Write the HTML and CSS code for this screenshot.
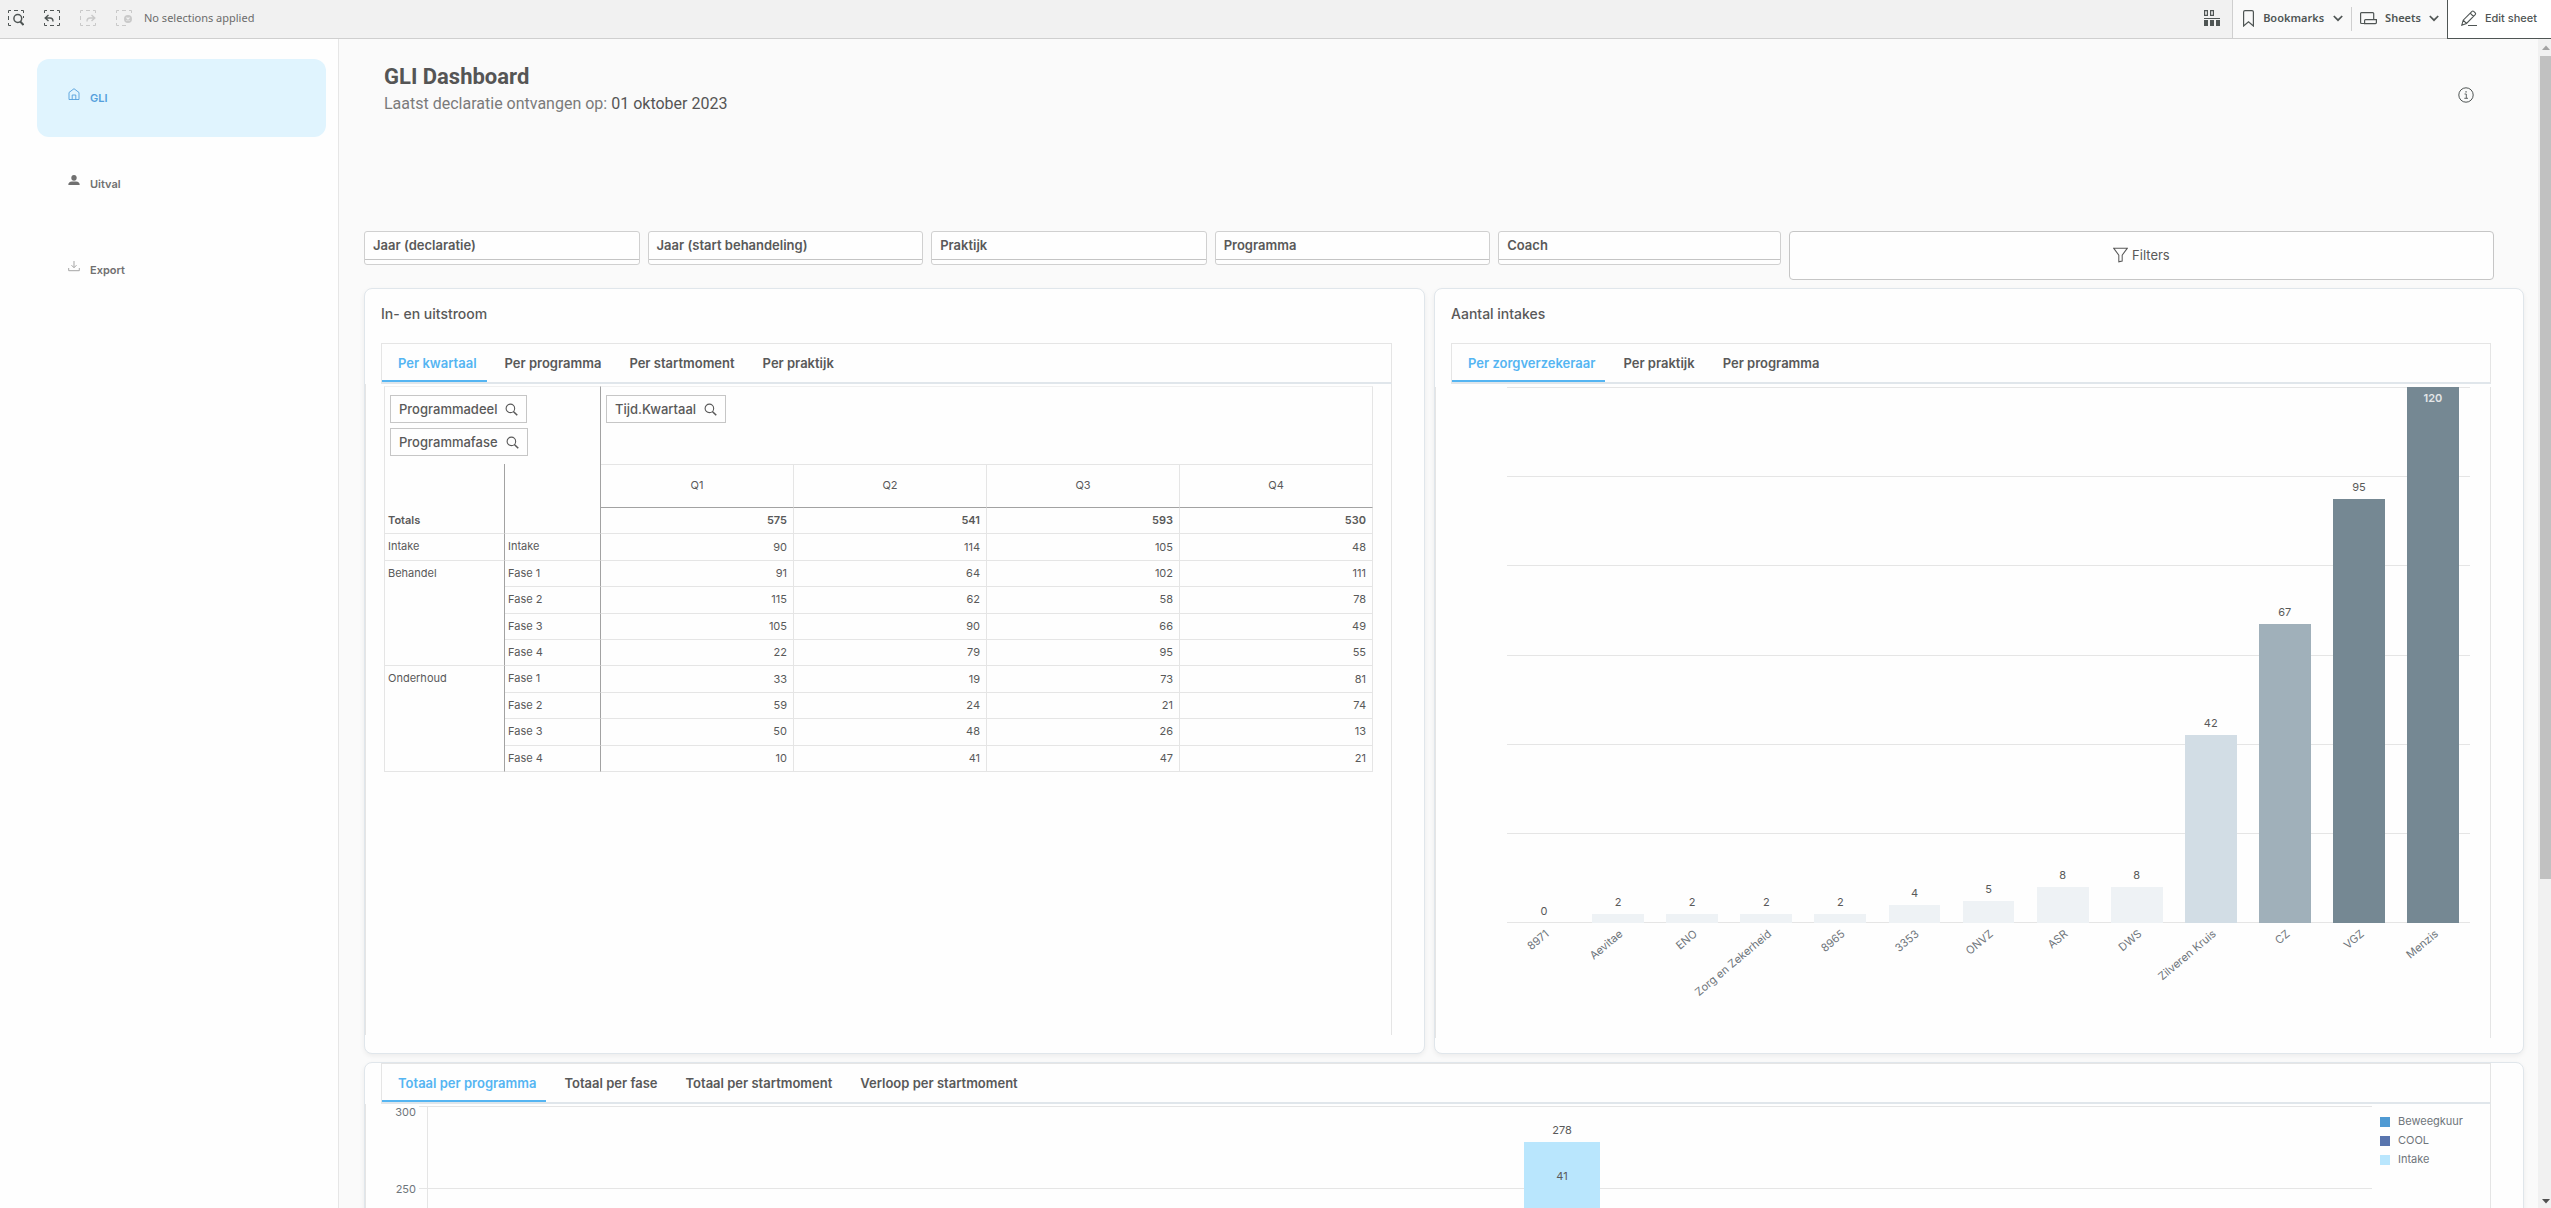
FILE: index.html
```html
<!DOCTYPE html>
<html lang="nl">
<head>
<meta charset="utf-8">
<meta name="viewport" content="width=device-width, initial-scale=1">
<title>GLI Dashboard</title>
<link rel="stylesheet" href="styles.css">
</head>
<body>
<svg class="sprite" aria-hidden="true">
  <symbol id="i-search" viewBox="0 0 14 14"><circle cx="5.8" cy="5.8" r="4.6" fill="none" stroke="currentColor" stroke-width="1.2"/><path d="M9 9.2l4.2 4" fill="none" stroke="currentColor" stroke-width="1.7"/></symbol>
  <symbol id="i-chevron" viewBox="0 0 10 7"><path d="M.8 1l4.2 4.2L9.2 1" fill="none" stroke="currentColor" stroke-width="1.7"/></symbol>
</svg>
<div class="app">
  <header class="toolbar">
    <div class="selections">
      <button class="tool" aria-label="Selection search">
        <svg viewBox="0 0 16 16"><path class="dash" d="M.5 3V.5H3M6 .5h4M13 .5h2.500V3M.5 6v4M.5 13v2.500H3M15.500 6v2"/><circle cx="9.800" cy="8.500" r="3.900" fill="none" stroke="currentColor" stroke-width="1.500"/><path d="M12.200 11.500l3.300 3.500" stroke="currentColor" stroke-width="2"/></svg>
      </button>
      <button class="tool" aria-label="Step back">
        <svg viewBox="0 0 16 16"><path class="dash" d="M.5 3V.5H3M6 .5h4M13 .5h2.500V3M15.500 6v4M15.500 13v2.500H13M10 15.500H6M3 15.500H.5V13"/><path d="M4.500 5L1.200 8l3.300 3M1.500 8H6q3 0 3 3.500" fill="none" stroke="currentColor" stroke-width="1.400"/></svg>
      </button>
      <button class="tool" aria-label="Step forward" disabled>
        <svg viewBox="0 0 16 16"><path class="dash" d="M3 .5H.5V3M6 .5h4M13 .5h2.500V3M.5 6v4M.5 13v2.500H3M6 15.500h4M13 15.500h2.500V13"/><path d="M11.500 5l3.300 3-3.300 3M14.500 8H10q-3 0-3 3.500" fill="none" stroke="currentColor" stroke-width="1.400"/></svg>
      </button>
      <button class="tool" aria-label="Clear all selections" disabled>
        <svg viewBox="0 0 16 16"><path class="dash" d="M3 .5H.5V3M6 .5h4M13 .5h2.500V3M.5 6v4M.5 13v2.500H3M6 15.500h4"/><circle cx="12" cy="9" r="4" fill="currentColor"/><path d="M10.500 7.500l3 3M13.500 7.500l-3 3" stroke="#f1f1f1" stroke-width="1.200"/></svg>
      </button>
      <span class="sel-text">No selections applied</span>
    </div>
    <button class="tool selections-tool" aria-label="Selections tool">
      <svg viewBox="0 0 16 16"><path d="M.6.600h2.800v4.800H.6zM6.600.600h2.800v4.800H6.600z" fill="none" stroke="currentColor" stroke-width="1.200"/><path d="M0 8h16v1H0zM0 10h4v6H0zM6 10h4v6H6zM12 10h4v6h-4z" fill="currentColor"/></svg>
    </button>
    <nav class="sheet-nav">
      <button class="nav-btn">
        <svg class="ic-bookmark" viewBox="0 0 11 17"><path d="M.6 2q0-1.400 1.400-1.400h7q1.400 0 1.400 1.400v14l-4.900-4.200L.6 16z" fill="none" stroke="currentColor" stroke-width="1.200"/></svg>
        <span>Bookmarks</span>
        <svg class="ic-chevron"><use href="#i-chevron"/></svg>
      </button>
      <button class="nav-btn">
        <svg class="ic-sheets" viewBox="0 0 17 13"><path d="M4.600 11.500H1.500q-.9 0-.9-.9v-9q0-1 .9-1h11.200q1 0 1 1v5.900M5.500 7.600h10.900v3q0 1-1 1H4.600V8.500q0-.9.900-.9z" fill="none" stroke="currentColor" stroke-width="1.200"/></svg>
        <span>Sheets</span>
        <svg class="ic-chevron"><use href="#i-chevron"/></svg>
      </button>
    </nav>
    <button class="edit-btn">
      <svg class="ic-edit" viewBox="0 0 16 16"><path d="M.8 15.200l1.400-5L11 1.400q.8-.8 1.700 0l1.500 1.500q.8.800 0 1.700L5.500 13.500zM2.200 10.200l3.300 3.300M9.200 3.200l3.300 3.300" fill="none" stroke="currentColor" stroke-width="1.100"/><path d="M7 15.500h9" stroke="currentColor"/></svg>
      <span>Edit sheet</span>
    </button>
  </header>

  <div class="workspace">
    <nav class="sidebar">
      <a class="side-link active" href="#gli">
        <svg viewBox="0 0 12 12"><path d="M1 11.500V4.500L6 .7l5 3.800v7zM4.200 11.500V7h3.600v4.500" fill="none" stroke="currentColor" stroke-width=".9"/></svg>
        <span>GLI</span>
      </a>
      <a class="side-link" href="#uitval">
        <svg viewBox="0 0 12 12"><ellipse cx="6" cy="3.800" rx="2.700" ry="2.900" fill="currentColor"/><path d="M.3 11q0-3.500 3.700-3.500h4q3.700 0 3.700 3.500z" fill="currentColor"/></svg>
        <span>Uitval</span>
      </a>
      <a class="side-link export" href="#export">
        <svg viewBox="0 0 12 12"><path d="M6 1v6.500M3.500 5.200L6 7.700l2.500-2.500M.7 8v2.700h10.600V8" fill="none" stroke="currentColor"/></svg>
        <span>Export</span>
      </a>
    </nav>

    <main class="sheet">
      <div class="sheet-head">
        <div>
          <h1>GLI Dashboard</h1>
          <p class="subtitle">Laatst declaratie ontvangen op: <span>01 oktober 2023</span></p>
        </div>
        <button class="info" aria-label="Info">
          <svg viewBox="0 0 16 16"><circle cx="8" cy="8" r="7.200" fill="none" stroke="currentColor"/><path d="M7.400 4.200h1.300v1.300H7.400z" fill="currentColor"/><path d="M6.500 7h1.800v4.300M6.300 11.300h3.700" fill="none" stroke="currentColor" stroke-width=".9"/></svg>
        </button>
      </div>

      <div class="filters">
        <button class="filter">Jaar (declaratie)</button>
        <button class="filter">Jaar (start behandeling)</button>
        <button class="filter">Praktijk</button>
        <button class="filter">Programma</button>
        <button class="filter">Coach</button>
        <button class="filter-all">
          <svg viewBox="0 0 16 16"><path d="M.7.700h14.600L9.800 8.200v6.200l-3.600.9V8.200z" fill="none" stroke="currentColor" stroke-width="1.100"/></svg>
          <span>Filters</span>
        </button>
      </div>

      <div class="cards">
        <section class="card">
          <h2>In- en uitstroom</h2>
          <div class="tabs" role="tablist">
            <button role="tab" class="tab active" aria-selected="true">Per kwartaal</button>
            <button role="tab" class="tab">Per programma</button>
            <button role="tab" class="tab">Per startmoment</button>
            <button role="tab" class="tab">Per praktijk</button>
          </div>
          <div class="panel tall">
            <div class="pivot-dims">
              <div class="dims rows">
                <button class="pill">Programmadeel <svg><use href="#i-search"/></svg></button>
                <button class="pill">Programmafase <svg><use href="#i-search"/></svg></button>
              </div>
              <div class="dims columns">
                <button class="pill">Tijd.Kwartaal <svg><use href="#i-search"/></svg></button>
              </div>
            </div>
            <table class="pivot">
              <colgroup><col class="c-part"><col class="c-phase"><col><col><col><col></colgroup>
              <thead>
                <tr><td class="blank"></td><td class="blank"></td><th scope="col">Q1</th><th scope="col">Q2</th><th scope="col">Q3</th><th scope="col">Q4</th></tr>
              </thead>
              <tbody>
                <tr class="totals"><th scope="row">Totals</th><th></th><td>575</td><td>541</td><td>593</td><td>530</td></tr>
                <tr><th>Intake</th><th scope="row">Intake</th><td>90</td><td>114</td><td>105</td><td>48</td></tr>
                <tr><th rowspan="4">Behandel</th><th scope="row">Fase 1</th><td>91</td><td>64</td><td>102</td><td>111</td></tr>
                <tr><th scope="row">Fase 2</th><td>115</td><td>62</td><td>58</td><td>78</td></tr>
                <tr><th scope="row">Fase 3</th><td>105</td><td>90</td><td>66</td><td>49</td></tr>
                <tr><th scope="row">Fase 4</th><td>22</td><td>79</td><td>95</td><td>55</td></tr>
                <tr><th rowspan="4">Onderhoud</th><th scope="row">Fase 1</th><td>33</td><td>19</td><td>73</td><td>81</td></tr>
                <tr><th scope="row">Fase 2</th><td>59</td><td>24</td><td>21</td><td>74</td></tr>
                <tr><th scope="row">Fase 3</th><td>50</td><td>48</td><td>26</td><td>13</td></tr>
                <tr><th scope="row">Fase 4</th><td>10</td><td>41</td><td>47</td><td>21</td></tr>
              </tbody>
            </table>
          </div>
        </section>

        <section class="card">
          <h2>Aantal intakes</h2>
          <div class="tabs" role="tablist">
            <button role="tab" class="tab active" aria-selected="true">Per zorgverzekeraar</button>
            <button role="tab" class="tab">Per praktijk</button>
            <button role="tab" class="tab">Per programma</button>
          </div>
          <div class="panel tall">
            <div class="chart intakes">
              <div class="grid"><i></i><i></i><i></i><i></i><i></i><i></i></div>
              <div class="bars">
                <div class="slot"><b>0</b><div class="bar" style="height:0%"></div><span>8971</span></div>
                <div class="slot"><b>2</b><div class="bar" style="height:1.67%"></div><span>Aevitae</span></div>
                <div class="slot"><b>2</b><div class="bar" style="height:1.67%"></div><span>ENO</span></div>
                <div class="slot"><b>2</b><div class="bar" style="height:1.67%"></div><span>Zorg en Zekerheid</span></div>
                <div class="slot"><b>2</b><div class="bar" style="height:1.67%"></div><span>8965</span></div>
                <div class="slot"><b>4</b><div class="bar" style="height:3.33%"></div><span>3353</span></div>
                <div class="slot"><b>5</b><div class="bar" style="height:4.17%"></div><span>ONVZ</span></div>
                <div class="slot"><b>8</b><div class="bar" style="height:6.67%"></div><span>ASR</span></div>
                <div class="slot"><b>8</b><div class="bar" style="height:6.67%"></div><span>DWS</span></div>
                <div class="slot"><b>42</b><div class="bar low" style="height:35%"></div><span>Zilveren Kruis</span></div>
                <div class="slot"><b>67</b><div class="bar mid" style="height:55.83%"></div><span>CZ</span></div>
                <div class="slot"><b>95</b><div class="bar high" style="height:79.17%"></div><span>VGZ</span></div>
                <div class="slot"><div class="bar high" style="height:100%"><b class="inside">120</b></div><span>Menzis</span></div>
              </div>
            </div>
          </div>
        </section>

        <section class="card wide">
          <div class="tabs" role="tablist">
            <button role="tab" class="tab active" aria-selected="true">Totaal per programma</button>
            <button role="tab" class="tab">Totaal per fase</button>
            <button role="tab" class="tab">Totaal per startmoment</button>
            <button role="tab" class="tab">Verloop per startmoment</button>
          </div>
          <div class="panel totals-panel">
            <div class="axis"><span>300</span><span>250</span></div>
            <div class="chart totals-chart">
              <div class="grid"><i></i><i></i><i></i><i></i><i></i><i></i></div>
              <div class="bars">
                <div class="slot"></div><div class="slot"></div><div class="slot"></div>
                <div class="slot"><b>278</b><div class="bar" style="height:92.67%"><div class="segment intake"><span>41</span></div></div></div>
                <div class="slot"></div><div class="slot"></div>
              </div>
            </div>
            <ul class="legend">
              <li class="k-beweegkuur">Beweegkuur</li>
              <li class="k-cool">COOL</li>
              <li class="k-intake">Intake</li>
            </ul>
          </div>
        </section>
      </div>
    </main>

    <div class="scrollbar" aria-hidden="true">
      <svg viewBox="0 0 8 5"><path d="M0 5l4-4.500L8 5z" fill="#a3a3a3"/></svg>
      <div class="thumb"></div>
      <div class="track"></div>
      <svg viewBox="0 0 8 5"><path d="M0 0l4 4.500L8 0z" fill="#505050"/></svg>
    </div>
  </div>
</div>
</body>
</html>
```
FILE: styles.css
```css
:root {
  --ink: #4f5554;
  --text: #595959;
  --muted: #6e757b;
  --line: #e5e5e5;
  --line-blue: #e0e6eb;
  --line-dark: #a2a2a2;
  --blue: #55b5f2;
}

* { box-sizing: border-box; }

body {
  margin: 0;
  font: 11px/16px Inter, "Liberation Sans", sans-serif;
  color: var(--text);
  background: #fafafa;
}

button {
  margin: 0;
  padding: 0;
  border: 0;
  background: none;
  font: inherit;
  color: inherit;
}

h1, h2, p, ul { margin: 0; padding: 0; }
svg { display: block; flex: none; }
.sprite { position: absolute; width: 0; height: 0; }

.app {
  height: 100vh;
  display: flex;
  flex-direction: column;
  overflow: hidden;
}

/* Toolbar */
.toolbar {
  flex: none;
  height: 39px;
  display: flex;
  color: var(--ink);
  background: #f1f1f1;
  border-bottom: 1px solid #cfcfcf;
  font-family: "Noto Sans", "Open Sans", sans-serif;
}
.selections {
  flex: 1;
  display: flex;
  align-items: center;
  gap: 20px;
  padding: 0 8px 2px;
}
.tool svg { width: 16px; height: 16px; }
.tool:disabled { color: #c9c9c9; }
.dash { fill: none; stroke: currentColor; }
.sel-text { margin-left: -8px; color: #6c6c6c; }
.selections-tool { padding: 0 12px 2px; }
.sheet-nav {
  display: flex;
  align-items: center;
  background: #f9f9f9;
  border-left: 1px solid #cfcfcf;
}
.nav-btn {
  height: 24px;
  display: flex;
  align-items: center;
  gap: 9px;
  padding: 0 8px 2px 10px;
  font-weight: 600;
}
.nav-btn + .nav-btn {
  gap: 8px;
  border-left: 1px solid #cfcfcf;
  padding-left: 8px;
}
.ic-bookmark { width: 11px; height: 17px; }
.ic-sheets { width: 17px; height: 13px; }
.ic-chevron { width: 10px; height: 7px; }
.edit-btn {
  height: 39px;
  display: flex;
  align-items: center;
  gap: 8px;
  padding: 0 14px 2px 13px;
  background: #fff;
  border-left: 1px solid #4f5554;
  border-bottom: 1px solid #4f5554;
  font-family: Inter, sans-serif;
  font-weight: 500;
}
.ic-edit { width: 16px; height: 16px; }

/* Workspace */
.workspace {
  flex: 1;
  min-height: 0;
  display: flex;
}
.sidebar {
  flex: none;
  width: 339px;
  display: flex;
  flex-direction: column;
  gap: 8px;
  padding: 20px 12px 0 37px;
  background: #fefefe;
  border-right: 1px solid #e6e6e6;
}
.side-link {
  height: 78px;
  display: flex;
  align-items: center;
  gap: 10px;
  padding-left: 31px;
  border-radius: 12px;
  color: #707070;
  font-weight: 600;
  text-decoration: none;
}
.side-link svg { width: 12px; height: 12px; margin-bottom: 9px; }
.side-link.active { background: #e0f4fe; color: #549fdc; }
.side-link.export svg { color: #a5a5a5; }

.sheet {
  flex: 1;
  min-width: 0;
  overflow: hidden;
  padding: 26px 14px 0 25px;
}
.sheet-head {
  display: flex;
  justify-content: space-between;
  height: 166px;
  padding: 0 50px 0 20px;
}
h1 {
  font: 700 22px/24px Roboto, "Noto Sans", sans-serif;
  color: #555;
}
.subtitle {
  margin-top: 5px;
  font: 16px/20px Roboto, "Noto Sans", sans-serif;
  color: #7a7a7a;
}
.subtitle span { color: #555; }
.info { align-self: flex-start; margin-top: 22px; color: var(--ink); }
.info svg { width: 16px; height: 16px; }

/* Filter bar */
.filters {
  display: grid;
  grid-template-columns: repeat(4, 551fr) 565fr 1410fr;
  gap: 8px;
  align-items: start;
  padding-right: 30px;
}
.filter {
  height: 34px;
  text-align: left;
  background: #fefefe;
  border: 1px solid #d0d0d0;
  border-radius: 3px;
  padding: 0 8px 6px;
  font: 600 13px/18px Inter, sans-serif;
  background-image: linear-gradient(#c4c4c4, #c4c4c4);
  background-size: 100% 1px;
  background-position: 0 27px;
  background-repeat: no-repeat;
}
.filter-all {
  height: 49px;
  display: flex;
  align-items: center;
  justify-content: center;
  gap: 4px;
  padding-bottom: 2px;
  background: #fefefe;
  border: 1px solid #c6c6c6;
  border-radius: 4px;
  font-size: 13px;
}
.filter-all svg { width: 15px; height: 16px; }

/* Cards */
.cards {
  display: grid;
  grid-template-columns: 1061fr 1090fr;
  gap: 8px 9px;
  margin-top: 8px;
}
.card {
  min-width: 0;
  background: #fefefe;
  border: 1px solid var(--line-blue);
  border-radius: 8px;
  box-shadow: 0 2px 5px rgba(0, 0, 0, .06);
  padding-bottom: 15px;
}
.card.wide { grid-column: 1 / -1; }
h2 {
  padding: 16px 16px 20px;
  font: 500 14px/18px Inter, sans-serif;
}
.tabs {
  display: flex;
  gap: 2px;
  height: 41px;
  margin: 0 32px 0 16px;
  border: 1px solid var(--line);
  border-bottom: 2px solid var(--line-blue);
}
.tab {
  padding: 2px 10px 0 16px;
  border-bottom: 2px solid transparent;
  font: 600 13px/18px Inter, sans-serif;
}
.tab.active { color: var(--blue); border-bottom-color: var(--blue); }
.panel {
  margin-right: 32px;
  border: solid var(--line);
  border-width: 0 1px;
}
.panel.tall { height: 651px; }

/* Pivot table */
.pivot-dims {
  height: 80px;
  margin: 0 18px;
  padding-top: 2px;
  display: flex;
}
.dims {
  display: flex;
  align-items: flex-start;
  padding: 9px 5px 0;
}
.dims.rows {
  flex: none;
  width: 217px;
  flex-direction: column;
  gap: 5px;
  border-left: 1px solid var(--line);
  border-right: 1px solid var(--line-dark);
  border-top: 1px solid #f0f0f0;
  padding-top: 8px;
}
.dims.columns {
  flex: 1;
  border-top: 1px solid #f0f0f0;
  border-right: 1px solid var(--line);
  padding-top: 8px;
}
.pill {
  height: 28px;
  display: flex;
  align-items: center;
  gap: 8px;
  padding: 0 8px;
  border: 1px solid #c6c6c6;
  font: 500 13px/18px Inter, sans-serif;
}
.pill svg { width: 13px; height: 13px; }
.pivot {
  width: calc(100% - 36px);
  height: 308px;
  margin: 0 18px;
  table-layout: fixed;
  border-collapse: separate;
  border-spacing: 0;
  border-left: 1px solid var(--line);
}
.c-part { width: 120px; }
.c-phase { width: 96px; }
.pivot th, .pivot td {
  padding: 0 6px 1px 3px;
  border-right: 1px solid var(--line);
  border-bottom: 1px solid var(--line);
  font-weight: 400;
}
.pivot td { text-align: right; }
.pivot tbody th { text-align: left; vertical-align: top; padding-top: 4px; }
.pivot tbody th, .pivot thead .blank { border-right-color: var(--line-dark); }
.pivot thead tr { height: 44px; }
.pivot thead th {
  padding: 0 0 2px;
  border-top: 1px solid var(--line);
  border-bottom-color: var(--line-dark);
}
.pivot thead .blank { border-bottom: 0; }
.pivot .totals th, .pivot .totals td { font-weight: 600; }

/* Charts */
.chart { display: grid; }
.grid, .bars { grid-area: 1 / 1; display: flex; }
.grid { flex-direction: column; border-bottom: 1px solid var(--line); }
.grid i { flex: 1; border-top: 1px solid var(--line); }
.slot {
  flex: 1;
  position: relative;
  display: flex;
  flex-direction: column;
  align-items: center;
  justify-content: flex-end;
}
.slot b { font-weight: 400; padding-bottom: 4px; }
.bar { flex: none; width: 70%; background: #eef2f5; text-align: center; }
.bar.low { background: #d2dde5; }
.bar.mid { background: #a0b0ba; }
.bar.high { background: #758893; }
.bar b.inside { display: block; padding-top: 3px; font-weight: 600; color: #e3e6e8; }
.intakes {
  height: 536px;
  margin: 3px 20px 0 71px;
}
.intakes .slot > span {
  position: absolute;
  top: 100%;
  right: 50%;
  margin: 2px -3px 0 0;
  line-height: 14px;
  white-space: nowrap;
  color: var(--muted);
  transform: rotate(-40deg);
  transform-origin: right center;
}

.totals-panel { display: flex; padding-top: 2px; }
.axis {
  flex: none;
  width: 53px;
  padding-right: 3px;
  text-align: right;
  line-height: 12px;
  color: var(--muted);
}
.axis span { display: block; height: 77px; }
.totals-chart { flex: 1; height: 493px; }
.totals-chart .bars { margin-left: 8px; border-left: 1px solid var(--line); }
.totals-chart .bar { width: 76px; background: none; }
.segment { height: 68px; display: grid; place-items: center; }
.segment.intake { background: #b9e6fd; }
.legend {
  flex: none;
  width: 118px;
  padding: 6px 0 0 8px;
  list-style: none;
  line-height: 19px;
  color: var(--muted);
}
.legend li { display: flex; align-items: center; gap: 8px; }
.legend li::before { content: ""; width: 10px; height: 10px; background: var(--key); }
.k-beweegkuur { --key: #4f9ad3; }
.k-cool { --key: #5975ae; }
.k-intake { --key: #b9e6fd; }

/* Scrollbar */
.scrollbar {
  flex: none;
  width: 13px;
  display: flex;
  flex-direction: column;
  align-items: center;
  gap: 6px;
  padding: 6px 0 4px 2px;
  background: #f1f1f1;
}
.scrollbar svg { width: 8px; height: 5px; }
.thumb { width: 100%; flex: 824; background: #c1c1c1; }
.track { flex: 308; }
```
